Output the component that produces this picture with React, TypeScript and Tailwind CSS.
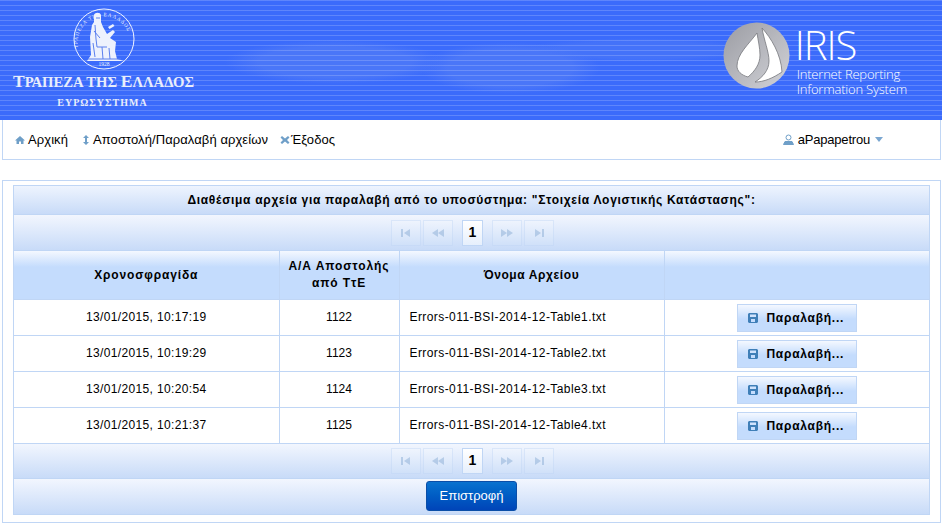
const rows = [
  { time: "13/01/2015, 10:17:19", id: "1122", file: "Errors-011-BSI-2014-12-Table1.txt" },
  { time: "13/01/2015, 10:19:29", id: "1123", file: "Errors-011-BSI-2014-12-Table2.txt" },
  { time: "13/01/2015, 10:20:54", id: "1124", file: "Errors-011-BSI-2014-12-Table3.txt" },
  { time: "13/01/2015, 10:21:37", id: "1125", file: "Errors-011-BSI-2014-12-Table4.txt" },
];

function Seal() {
  return (
    <svg width="64" height="64" viewBox="0 0 64 64" className="block">
      <circle cx="32" cy="32" r="30" fill="none" stroke="#f2f5fe" strokeWidth="1" />
      <defs>
        <path id="sealArc" d="M6 41 A26.500 26.500 0 1 1 58 41" />
      </defs>
      <text fontSize="5.200" fill="#eef2fd" fontFamily="'Liberation Serif', serif" letterSpacing="0.9">
        <textPath href="#sealArc">ΤΡΑΠΕΖΑ ΤΗΣ ΕΛΛΑΔΟΣ</textPath>
      </text>
      <text x="32" y="59" fontSize="5.500" textAnchor="middle" fill="#eef2fd" fontFamily="'Liberation Serif', serif">1928</text>
      <path d="M22 8C23 5 28 5 29 8L29 15L31 20L35 27L41 23L43 25L38 31L44 35L43 44L45 52L52 54L15 54L19 48L18 30L20 18L22 15z" fill="#eef2fd" />
      <path d="M23 18l1 14 1 8 10 0M24 11h4M22 24l6 7M21 36l2 14M30 40l1 12M37 41l1 11M16 52h33" fill="none" stroke="#5c80ee" strokeWidth="1" />
      <path d="M36 20l5-3 1.500 2-5 3z" fill="#eef2fd" />
    </svg>
  );
}

function IrisLogo() {
  return (
    <svg width="67" height="67" viewBox="0 0 67 67" className="block">
      <defs>
        <linearGradient id="irisDisc" x1="0" y1="0" x2="1" y2="1">
          <stop offset="0" stopColor="#9b9ca3" />
          <stop offset="1" stopColor="#d2d3d8" />
        </linearGradient>
      </defs>
      <circle cx="33.500" cy="33.500" r="33" fill="url(#irisDisc)" />
      <path d="M34 11C26 22 14 32 14 44C14 49 18 53 25 55C32 49 37 42 37 33C37 26 35 18 34 11z" fill="#fff" stroke="#77787e" strokeWidth="0.800" />
      <path d="M39 6C48 16 58 32 59 50C50 56 41 60 32 60C40 55 46 48 46 39C46 30 41 18 39 6z" fill="#fff" stroke="#77787e" strokeWidth="0.800" />
    </svg>
  );
}

function NavIcon({ d, className }: { d: string; className: string }) {
  return (
    <svg width="10" height="10" viewBox="0 0 10 10" className={`shrink-0 ${className}`} fill="#6f9fc8">
      <path d={d} />
    </svg>
  );
}

function DiskIcon() {
  return (
    <svg width="10" height="10" viewBox="0 0 10 10" fill="#3f7fb8" className="shrink-0">
      <path fillRule="evenodd" d="M1 0h8l1 1v8l-1 1H1L0 9V1zM2 1.500V4h6V1.500zM3 6v3h4V6z" />
    </svg>
  );
}

function PagerButton({ d }: { d: string }) {
  return (
    <span className="flex h-[26px] w-[30px] items-center justify-center border border-[#c0d6f5] bg-gradient-to-b from-[#f4f8fe] to-[#d5e4fa] opacity-40">
      <svg width="14" height="8" viewBox="0 0 14 8" fill="#7ba2cc">
        <path d={d} />
      </svg>
    </span>
  );
}

function Paginator({ className }: { className: string }) {
  return (
    <div className={`flex items-center justify-center bg-gradient-to-b from-[#f2f6fe] to-[#c8dbf8] border-b border-[#c0d6f5] pl-[2px] ${className}`}>
      <div className="flex items-center gap-[2px]">
        <PagerButton d="M2 0h2v8H2zM11 0v8L5 4z" />
        <PagerButton d="M7 0v8L1 4zM13 0v8L7 4z" />
      </div>
      <span className="mx-[9px] flex h-[26px] w-[21px] items-center justify-center border border-[#c0d6f5] bg-gradient-to-b from-white to-[#e6effc] text-[14px] font-bold text-black">
        1
      </span>
      <div className="flex items-center gap-[2px]">
        <PagerButton d="M1 0v8l6-4zM7 0v8l6-4z" />
        <PagerButton d="M3 0v8l6-4zM10 0h2v8h-2z" />
      </div>
    </div>
  );
}

export default function App() {
  return (
    <div className="h-[527px] w-[942px] overflow-hidden bg-white font-['Liberation_Sans',Arial,sans-serif] text-[12px] text-black">
      <header className="flex h-[120px] justify-between bg-[#3b6bfb] bg-[image:repeating-linear-gradient(180deg,#ffffff2e_0px,#ffffff2e_1px,transparent_1px,transparent_5px),radial-gradient(ellipse_110px_22px_at_335px_62px,#4a76f8_70%,transparent),radial-gradient(ellipse_90px_26px_at_510px_68px,#4a76f8_70%,transparent),radial-gradient(ellipse_120px_12px_at_640px_50px,#4472f9_70%,transparent)] pl-[13px] pr-[35px]">
        <div className="flex w-[181px] flex-col items-center pt-[7px] font-['Liberation_Serif',serif] text-[#e8edfb]">
          <Seal />
          <div className="whitespace-nowrap text-[17.500px] font-bold leading-[20px]">
            <span>Τ</span>
            <span className="text-[14.700px]">ΡΑΠΕΖΑ ΤΗΣ </span>
            <span>Ε</span>
            <span className="text-[14.700px]">ΛΛΑΔΟΣ</span>
          </div>
          <div className="ml-[-2px] mt-[5px] whitespace-nowrap text-[10px] font-bold leading-[12px] tracking-[1px]">ΕΥΡΩΣΥΣΤΗΜΑ</div>
        </div>
        <div className="flex items-start gap-[7px] pt-[22px] font-['Open_Sans',sans-serif] text-white">
          <IrisLogo />
          <div className="pt-[4px]">
            <div className="ml-[-2px] h-[38px] text-[40px] font-light leading-[38px] tracking-[-1px]">IRIS</div>
            <div className="mt-[3px] whitespace-nowrap text-[13px] font-light leading-[15px] tracking-[-0.200px]">Internet Reporting</div>
            <div className="whitespace-nowrap text-[13px] font-light leading-[15px] tracking-[-0.200px]">Information System</div>
          </div>
        </div>
      </header>

      <nav className="mx-[2px] mr-[1px] flex h-[40px] items-center justify-between border border-t-0 border-[#c0d6f5] pl-[12px] pr-[57px] text-[13px] tracking-[0.080px]">
        <div className="flex items-center">
          <a className="flex items-center">
            <NavIcon className="mr-[3px]" d="M5 1L0 5.500h1.500V9H4V6.500h2V9h2.500V5.500H10z" />
            Αρχική
          </a>
          <a className="ml-[13px] flex items-center">
            <NavIcon className="mr-[2px]" d="M5 0l3 3H6v4h2l-3 3-3-3h2V3H2z" />
            Αποστολή/Παραλαβή αρχείων
          </a>
          <a className="ml-[12px] flex items-center">
            <NavIcon className="mr-[1px]" d="M2 1l3 2.500L8 1l1.500 1.500L7 5l2.500 2.500L8 9 5 6.500 2 9 .5 7.500 3 5 .5 2.500z" />
            Έξοδος
          </a>
        </div>
        <div className="flex items-center tracking-[-0.200px]">
          <svg width="11" height="11" viewBox="0 0 11 11" fill="none" stroke="#6f9fc8" className="mr-[4px]">
            <circle cx="5.500" cy="3.500" r="2.500" />
            <path d="M2 7.500h7L10.500 10.500H.5z" fill="#6f9fc8" />
          </svg>
          aPapapetrou
          <svg width="8" height="5" viewBox="0 0 8 5" fill="#7ba7d1" className="ml-[5px]">
            <path d="M0 0h8L4 5z" />
          </svg>
        </div>
      </nav>

      <section className="mx-[2px] mr-[1px] mt-[20px] h-[343px] border border-[#c0d6f5] px-[10px] pt-[4px]">
        <div className="border border-b-0 border-[#c0d6f5]">
          <div className="flex h-[29px] items-center justify-center border-b border-[#c0d6f5] bg-gradient-to-b from-[#eef4fe] to-[#c8dbf8] text-[12px] font-bold tracking-[0.700px]">
            Διαθέσιμα αρχεία για παραλαβή από το υποσύστημα: "Στοιχεία Λογιστικής Κατάστασης":
          </div>
          <Paginator className="h-[36px]" />
          <table className="w-full table-fixed border-collapse">
            <colgroup>
              <col className="w-[265px]" />
              <col className="w-[120px]" />
              <col className="w-[265px]" />
              <col />
            </colgroup>
            <thead>
              <tr className="h-[48px] bg-[#c4dcfd] bg-[linear-gradient(180deg,#f4f8ff_0px,#c4dcfd_16px)]">
                <th className="border-r border-b border-[#c0d6f5] font-bold tracking-[0.850px]">Χρονοσφραγίδα</th>
                <th className="border-r border-b border-[#c0d6f5] font-bold leading-[17px] tracking-[0.900px]">
                  Α/Α Αποστολής
                  <br />
                  από ΤτΕ
                </th>
                <th className="border-r border-b border-[#c0d6f5] font-bold tracking-[0.600px]">Όνομα Αρχείου</th>
                <th className="border-b border-[#c0d6f5]" />
              </tr>
            </thead>
            <tbody>
              {rows.map((r) => (
                <tr key={r.id} className="h-[36px]">
                  <td className="border-r border-b border-[#c0d6f5] text-center tracking-[0.350px]">{r.time}</td>
                  <td className="border-r border-b border-[#c0d6f5] text-center">{r.id}</td>
                  <td className="border-r border-b border-[#c0d6f5] pl-[10px] tracking-[0.420px]">{r.file}</td>
                  <td className="border-b border-[#c0d6f5] pt-[1px]">
                    <button className="mx-auto flex h-[28px] w-[120px] items-center justify-center gap-[8px] border border-[#c0d6f5] bg-[#c4dcfd] bg-[linear-gradient(180deg,#f4f8ff_0px,#c4dcfd_14px)] pr-[1px] font-bold tracking-[0.750px]">
                      <DiskIcon />
                      Παραλαβή...
                    </button>
                  </td>
                </tr>
              ))}
            </tbody>
          </table>
          <Paginator className="h-[35px]" />
          <div className="flex h-[36px] items-center justify-center border-b border-[#c0d6f5] bg-gradient-to-b from-[#f2f6fe] to-[#c8dbf8]">
            <button className="h-[30px] w-[91px] rounded-[3px] border border-[#0a4ea8] bg-gradient-to-b from-[#0a72cf] to-[#0044b8] text-[13px] text-white">
              Επιστροφή
            </button>
          </div>
        </div>
      </section>
    </div>
  );
}
